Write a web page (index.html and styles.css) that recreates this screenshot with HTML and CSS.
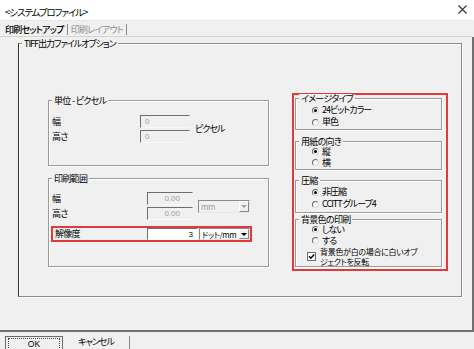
FILE: index.html
```html
<!DOCTYPE html>
<html lang="ja">
<head>
<meta charset="utf-8">
<title>システムプロファイル</title>
<link rel="stylesheet" href="styles.css">
</head>
<body>
<div class="titlebar">
  <span class="title">&lt;システムプロファイル&gt;</span>
  <svg class="close" width="9" height="9" viewBox="0 0 9 9"><path d="M0.5 0.5L8.5 8.5M8.5 0.5L0.5 8.5" stroke="#333" stroke-width="1.1" fill="none"/></svg>
</div>
<div class="tabs">
  <span class="tab active">印刷セットアップ</span>
  <span class="tab inactive">印刷レイアウト</span>
</div>
<div class="panel">
  <div class="group outer">
    <span class="legend">TIFF出力ファイルオプション</span>
    <div class="leftcol">
      <div class="group g-unit">
        <span class="legend">単位 - ピクセル</span>
        <div class="fields">
          <div class="rows">
            <div class="row"><span class="lbl w88">幅</span><span class="inp dis w50">0</span></div>
            <div class="row"><span class="lbl w88">高さ</span><span class="inp dis w50">0</span></div>
          </div>
          <span class="suffix">ピクセル</span>
        </div>
      </div>
      <div class="group g-range">
        <span class="legend">印刷範囲</span>
        <div class="fields">
          <div class="rows">
            <div class="row"><span class="lbl w95">幅</span><span class="inp dis num w46">0.00</span></div>
            <div class="row"><span class="lbl w95">高さ</span><span class="inp dis num w46">0.00</span></div>
          </div>
          <span class="combo dis w52"><span class="ctext">mm</span><span class="cbtn"><span class="arrow"></span></span></span>
        </div>
        <div class="resrow">
          <span class="lbl w92">解像度</span>
          <span class="inp live num w51">3</span>
          <span class="combo live w51"><span class="ctext">ドット/mm</span><span class="cbtn"><span class="arrow"></span></span></span>
        </div>
      </div>
    </div>
    <div class="redbox">
      <div class="group rg g-img">
        <span class="legend">イメージタイプ</span>
        <div class="opt"><span class="radio on"></span>24ビットカラー</div>
        <div class="opt"><span class="radio"></span>単色</div>
      </div>
      <div class="group rg g-ori">
        <span class="legend">用紙の向き</span>
        <div class="opt"><span class="radio on"></span>縦</div>
        <div class="opt"><span class="radio"></span>横</div>
      </div>
      <div class="group rg g-cmp">
        <span class="legend">圧縮</span>
        <div class="opt"><span class="radio on"></span>非圧縮</div>
        <div class="opt"><span class="radio"></span>CCITT グループ4</div>
      </div>
      <div class="group rg g-bg">
        <span class="legend">背景色の印刷</span>
        <div class="opt"><span class="radio on"></span>しない</div>
        <div class="opt"><span class="radio"></span>する</div>
        <div class="chk">
          <svg class="cbox" width="9" height="9" viewBox="0 0 9 9"><rect x="0.5" y="0.5" width="8" height="8" fill="#fff" stroke="#6a6a6a"/><path d="M2 4.3L3.8 6.2L7.2 2.4" stroke="#000" stroke-width="1.5" fill="none"/></svg>
          <span class="ctxt">背景色が白の場合に白いオブ<br>ジェクトを反転</span>
        </div>
      </div>
    </div>
  </div>
</div>
<div class="buttons">
  <span class="btn ok"><span class="focus">OK</span></span>
  <span class="btn cancel">キャンセル</span>
</div>
</body>
</html>
```
FILE: styles.css
```css
* { box-sizing: border-box; }
html, body { margin: 0; padding: 0; }
body {
  width: 474px;
  height: 349px;
  overflow: hidden;
  background: #f0f0f0;
  color: #000;
  font-family: "Noto Sans CJK JP", "Liberation Sans", sans-serif;
  font-size: 9px;
  line-height: 12px;
  letter-spacing: -0.7px;
  font-feature-settings: "palt";
}
.titlebar {
  height: 20px;
  background: #fff;
  display: flex;
  align-items: center;
  justify-content: space-between;
  padding: 3px 7px 0 5px;
}
.title { font-size: 9.5px; letter-spacing: -1.1px; }
.close { display: block; margin-top: -4px; }
.tabs {
  height: 17px;
  width: 472px;
  display: flex;
  align-items: center;
  padding: 1px 0 0 5px;
  border-top: 1px solid #e6e6e6;
  border-bottom: 1px solid #d4d4d4;
}
.tab {
  line-height: 11px;
  padding-right: 3px;
  margin-right: 3px;
  border-right: 1px solid #8a8a8a;
}
.tab.active { font-weight: 500; }
.tab.inactive { color: #8e8e8e; }
.panel {
  width: 474px;
  height: 295px;
  border-right: 2px solid #6f6f6f;
  border-bottom: 2px solid #6f6f6f;
  padding: 6px 0 0 18px;
}
.group {
  position: relative;
  border: 1px solid #9a9a9a;
  box-shadow: inset 1px 1px 0 #fff, 1px 1px 0 #fff;
}
.legend {
  position: absolute;
  top: -5px;
  left: 3px;
  padding: 0 2px;
  background: #f0f0f0;
  line-height: 9px;
  white-space: nowrap;
}
.outer {
  width: 444px;
  height: 254px;
  border-color: #8a8a8a;
  border-left-color: #333;
  display: flex;
  align-items: flex-start;
}
.outer > .legend { letter-spacing: -1px; }
.leftcol {
  margin: 56px 0 0 29px;
  display: flex;
  flex-direction: column;
  gap: 12px;
}
.g-unit { width: 221px; height: 66px; }
.g-range { width: 221px; height: 89px; }
.fields {
  display: flex;
  align-items: center;
  padding: 14px 0 0 3px;
}
.g-range .fields { padding-top: 13px; }
.rows { display: flex; flex-direction: column; gap: 2px; }
.row { display: flex; align-items: center; height: 13px; }
.lbl { display: block; }
.w88 { width: 88px; }
.w95 { width: 95px; }
.w92 { width: 92px; }
.w50 { width: 50px; }
.w46 { width: 46px; }
.w51 { width: 51px; }
.w52 { width: 52px; }
.inp {
  display: block;
  height: 13px;
  line-height: 12px;
  padding-left: 4px;
  font-family: "Liberation Sans", sans-serif;
  font-size: 8px;
  letter-spacing: 0;
  border-top: 1px solid #6e6e6e;
  border-left: 1px solid #6e6e6e;
  border-right: 1px solid #f0f0f0;
  border-bottom: 1px solid #f8f8f8;
}
.inp.dis { color: #a0a0a0; background: #f0f0f0; }
.inp.num { text-align: right; padding: 0 12px 0 0; }
.inp.live { background: #fff; color: #000; padding-right: 4px; height: 12px; border-bottom-color: #fff; border-right-color: #fff; }
.suffix { margin-left: 5px; letter-spacing: -1px; }
.combo {
  display: flex;
  align-items: stretch;
  height: 13px;
  border-top: 1px solid #8a8a8a;
  border-left: 1px solid #8a8a8a;
  border-right: 1px solid #e8e8e8;
  border-bottom: 1px solid #e8e8e8;
}
.g-range .fields .combo { margin-left: 5px; }
.combo.dis { color: #a0a0a0; background: #f0f0f0; }
.combo.live { background: #fff; height: 12px; margin-left: 1px; }
.ctext { flex: 1; padding-left: 2px; line-height: 11px; font-size: 8px; letter-spacing: -0.4px; white-space: nowrap; overflow: hidden; }
.cbtn {
  width: 10px;
  flex: none;
  display: flex;
  align-items: center;
  justify-content: center;
  background: #f0f0f0;
  border-top: 1px solid #fff;
  border-left: 1px solid #fff;
  border-right: 1px solid #888;
  border-bottom: 1px solid #888;
}
.arrow {
  width: 0;
  height: 0;
  border-left: 3px solid transparent;
  border-right: 3px solid transparent;
  border-top: 3px solid #a0a0a0;
}
.combo.live .arrow { border-top-color: #000; }
.resrow {
  display: flex;
  align-items: center;
  width: 201px;
  height: 16px;
  margin: 6px 0 0 2px;
  padding-left: 2px;
  border: 2px solid #e03a3a;
}
.redbox {
  width: 156px;
  height: 178px;
  margin: 49px 0 0 23px;
  border: 2px solid #e03a3a;
  padding: 3px 0 0 1px;
}
.rg { width: 147px; padding: 5px 0 0 16px; }
.g-img { height: 32px; }
.g-ori { height: 29px; margin-top: 11px; padding-top: 4px; }
.g-cmp { height: 33px; margin-top: 10px; }
.g-bg { height: 48px; margin-top: 6px; padding-top: 4px; }
.g-ori .opt { height: 11px; }
.g-bg .opt { height: 11px; }
.opt { display: flex; align-items: center; height: 12px; white-space: nowrap; letter-spacing: -1px; }
.radio {
  display: block;
  flex: none;
  width: 7px;
  height: 7px;
  border-radius: 50%;
  margin-right: 3px;
  border: 1px solid;
  border-color: #6a6a6a #dcdcdc #dcdcdc #6a6a6a;
  background: #f7f7f7;
  position: relative;
}
.radio.on::after {
  content: "";
  position: absolute;
  left: 1px;
  top: 1px;
  width: 3px;
  height: 3px;
  border-radius: 50%;
  background: #000;
}
.chk {
  display: flex;
  align-items: center;
  margin: 1px 0 0 -5px;
}
.cbox { display: block; flex: none; margin-right: 4px; }
.ctxt { line-height: 9.5px; font-size: 8px; letter-spacing: -0.3px; }
.buttons {
  display: flex;
  padding: 4px 0 0 5px;
  height: 17px;
}
.btn {
  display: flex;
  align-items: flex-start;
  justify-content: center;
  height: 13px;
  line-height: 10px;
}
.ok {
  width: 58px;
  border: 1px solid #6a6a6a;
  border-bottom: none;
  padding: 1px 2px 0;
}
.focus {
  display: block;
  width: 100%;
  text-align: center;
  border: 1px dotted #444;
  border-bottom: none;
  height: 12px;
  letter-spacing: 0;
  font-family: "Liberation Sans", sans-serif;
  font-size: 8.5px;
}
.cancel {
  width: 67px;
  border-right: 1px solid #8a8a8a;
  padding-top: 1px;
  letter-spacing: -1px;
}
```
